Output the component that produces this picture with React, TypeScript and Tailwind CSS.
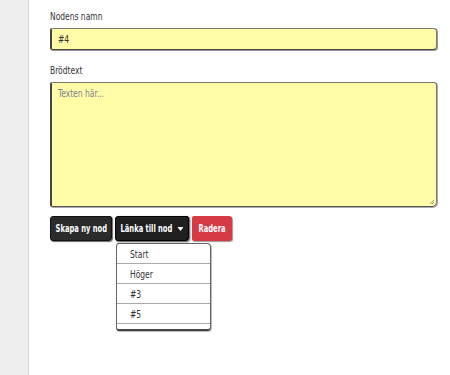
import * as React from "react";

const font = { fontFamily: '"DejaVu Sans Condensed", "Liberation Sans Narrow", "Liberation Sans", sans-serif' };

// the reference font is much narrower than anything installed, so squeeze it
function Narrow({ children, center }: { children: React.ReactNode; center?: boolean }) {
  return (
    <span className={`inline-block whitespace-nowrap scale-x-[0.8] ${center ? "origin-center" : "origin-left"}`}>
      {children}
    </span>
  );
}

// buttons use a slightly tighter squeeze
function NarrowBtn({ children }: { children: React.ReactNode }) {
  return <span className="inline-block whitespace-nowrap scale-x-[0.75] origin-center">{children}</span>;
}

export default function App() {
  const [open] = React.useState(true);
  const items = ["Start", "Höger", "#3", "#5"];
  return (
    <div className="flex min-h-[375px] w-[450px] bg-white text-[#333]" style={font}>
      {/* sidebar */}
      <div className="w-[29px] shrink-0 border-r border-[#d4d4d4] bg-[#eeeeee]" />

      <div className="flex-1 pl-[21px] pr-[13px] pt-[9px]">
        <label className="block text-[10.5px] leading-[14px]">
          <Narrow>Nodens namn</Narrow>
        </label>
        <div className="mt-[5px] h-[22px] rounded-[2px_3px_4px_2px] border border-[#777] border-b-[#444] border-l-2 border-l-[#444] bg-[#fffca8] px-[6px] text-[10.5px] leading-[20px] shadow-[1px_1px_0_#999]">
          <Narrow>#4</Narrow>
        </div>

        <label className="mt-[13px] block text-[10.5px] leading-[14px]">
          <Narrow>Brödtext</Narrow>
        </label>
        <div className="relative mt-[5px] h-[125px] rounded-[2px_3px_5px_2px] border border-[#777] border-l-2 border-l-[#444] border-b-[#555] bg-[#fffca8] px-[6px] pt-[3px] text-[10.5px] leading-[14px] text-[#7d8290] shadow-[1px_1px_0_#aaa]">
          <Narrow>Texten här...</Narrow>
          <svg className="absolute bottom-[1px] right-[1px]" width="6" height="6" viewBox="0 0 6 6">
            <path d="M5 1 L1 5 M5 3 L3 5" stroke="#999" strokeWidth="1" />
          </svg>
        </div>

        <div className="mt-[9px] flex items-start gap-[3px]">
          <button className="flex h-[25px] w-[62px] items-center justify-center overflow-hidden rounded-[3px_2px_4px_3px] border border-[#111] bg-[#2b2b2b] text-[10px] font-bold text-white shadow-[1px_1px_1px_#666]">
            <NarrowBtn>Skapa ny nod</NarrowBtn>
          </button>
          <div className="relative">
            <button className="flex h-[25px] w-[74px] items-center justify-center overflow-hidden rounded-[3px_2px_4px_3px] border border-[#000] bg-[#1f1f1f] text-[10px] font-bold text-white shadow-[1px_1px_2px_#444]">
              <NarrowBtn>
                <span className="flex items-center gap-[7px]">
                  Länka till nod
                  <svg width="8" height="4" viewBox="0 0 8 4">
                    <path d="M0 0 L8 0 L4 4 Z" fill="#fff" />
                  </svg>
                </span>
              </NarrowBtn>
            </button>
            {open && (
              <div className="absolute left-[1px] top-[27px] z-10 w-[95px] rounded-[3px_4px_4px_3px] border border-[#666] border-b-2 border-b-[#444] bg-white pb-[5px] shadow-[1px_1px_0_#bbb]">
                {items.map((it) => (
                  <div
                    key={it}
                    className="h-[20px] border-b border-[#aaa] pl-[13px] text-[10.5px] leading-[20px] text-[#333]"
                  >
                    <Narrow>{it}</Narrow>
                  </div>
                ))}
              </div>
            )}
          </div>
          <button className="flex h-[25px] w-[40px] items-center justify-center overflow-hidden rounded-[2px_3px_3px_2px] bg-[#d63a45] text-[10px] font-bold text-white shadow-[1px_1px_1px_#999]">
            <NarrowBtn>Radera</NarrowBtn>
          </button>
        </div>
      </div>
    </div>
  );
}
